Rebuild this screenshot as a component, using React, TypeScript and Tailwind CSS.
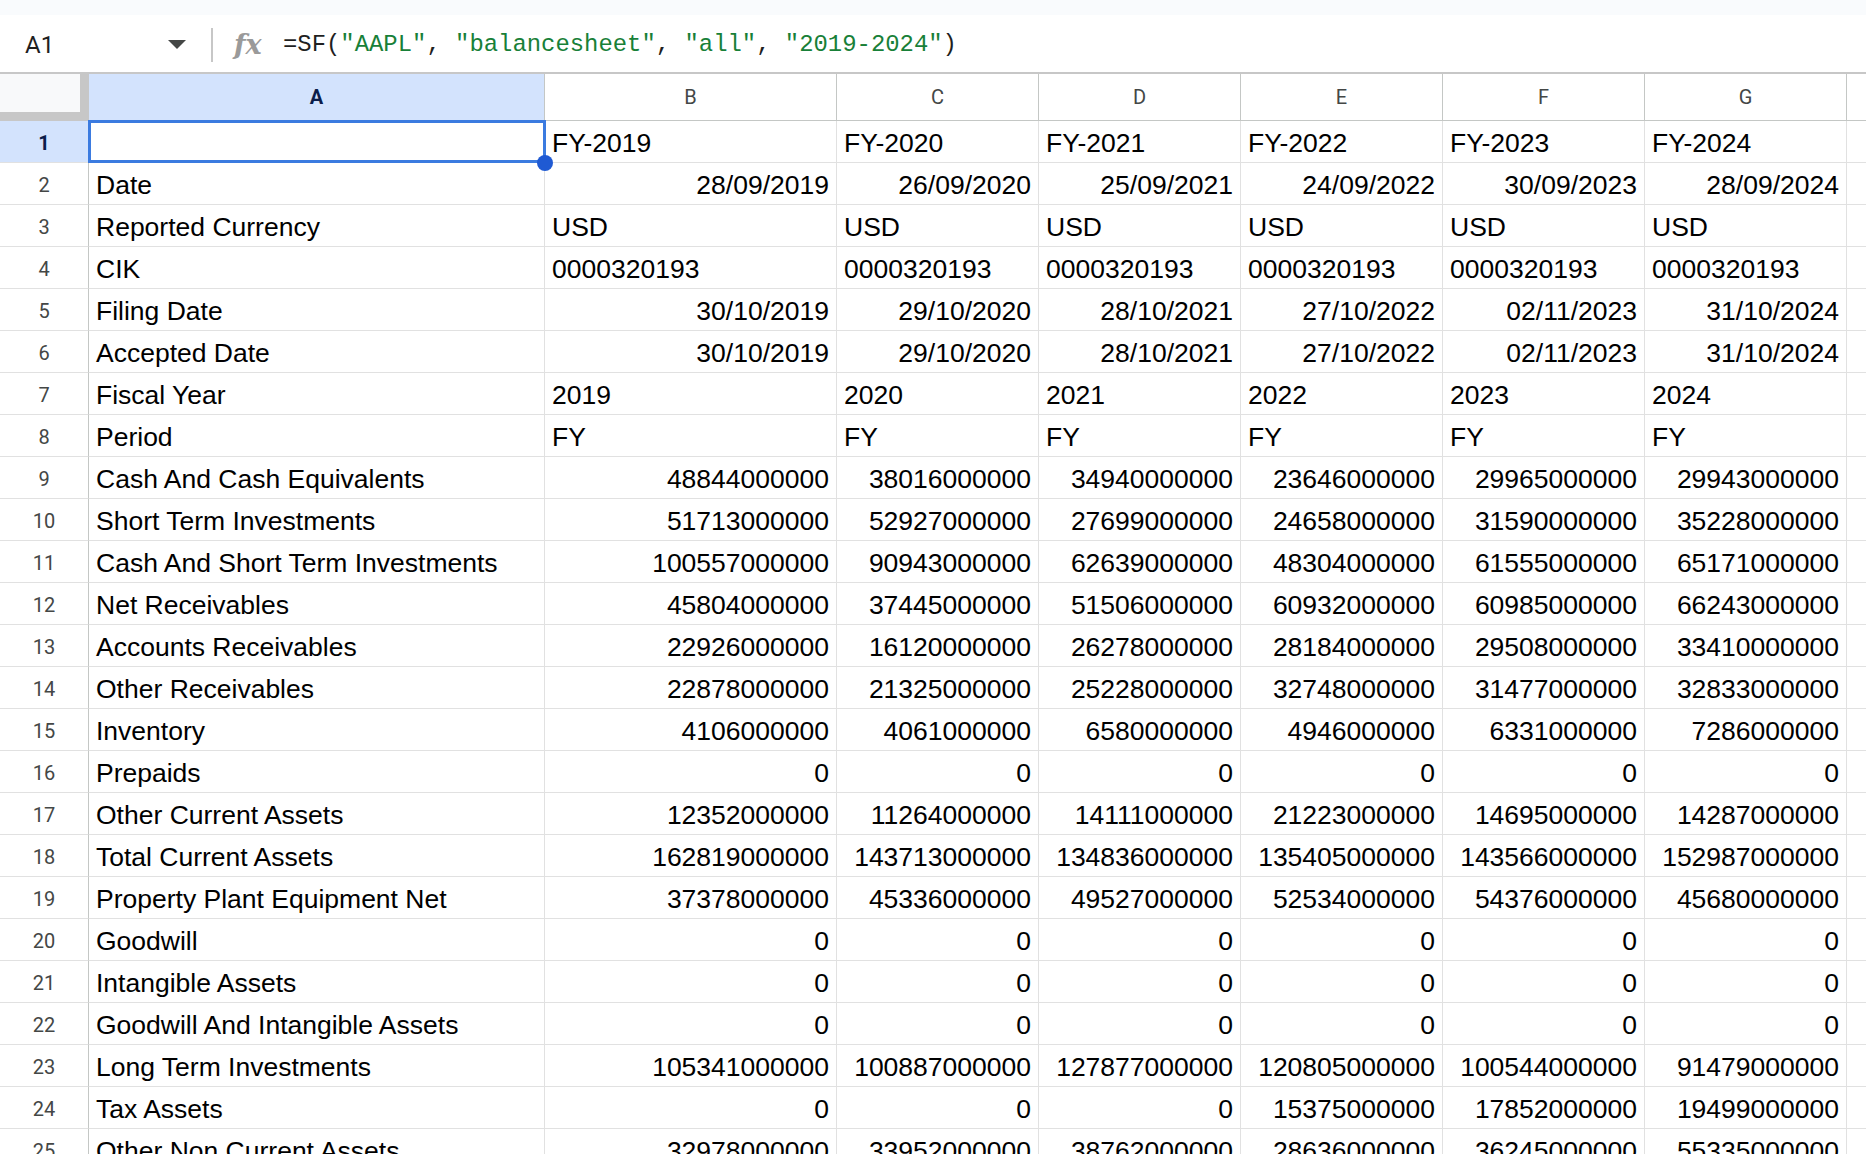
import React from "react";

type Align = "l" | "r";
type Row = { label: string; vals: string[]; align: Align };

const same = (v: string): string[] => [v, v, v, v, v, v];

const rows: Row[] = [
  { label: "", vals: ["FY-2019", "FY-2020", "FY-2021", "FY-2022", "FY-2023", "FY-2024"], align: "l" },
  { label: "Date", vals: ["28/09/2019", "26/09/2020", "25/09/2021", "24/09/2022", "30/09/2023", "28/09/2024"], align: "r" },
  { label: "Reported Currency", vals: same("USD"), align: "l" },
  { label: "CIK", vals: same("0000320193"), align: "l" },
  { label: "Filing Date", vals: ["30/10/2019", "29/10/2020", "28/10/2021", "27/10/2022", "02/11/2023", "31/10/2024"], align: "r" },
  { label: "Accepted Date", vals: ["30/10/2019", "29/10/2020", "28/10/2021", "27/10/2022", "02/11/2023", "31/10/2024"], align: "r" },
  { label: "Fiscal Year", vals: ["2019", "2020", "2021", "2022", "2023", "2024"], align: "l" },
  { label: "Period", vals: same("FY"), align: "l" },
  { label: "Cash And Cash Equivalents", vals: ["48844000000", "38016000000", "34940000000", "23646000000", "29965000000", "29943000000"], align: "r" },
  { label: "Short Term Investments", vals: ["51713000000", "52927000000", "27699000000", "24658000000", "31590000000", "35228000000"], align: "r" },
  { label: "Cash And Short Term Investments", vals: ["100557000000", "90943000000", "62639000000", "48304000000", "61555000000", "65171000000"], align: "r" },
  { label: "Net Receivables", vals: ["45804000000", "37445000000", "51506000000", "60932000000", "60985000000", "66243000000"], align: "r" },
  { label: "Accounts Receivables", vals: ["22926000000", "16120000000", "26278000000", "28184000000", "29508000000", "33410000000"], align: "r" },
  { label: "Other Receivables", vals: ["22878000000", "21325000000", "25228000000", "32748000000", "31477000000", "32833000000"], align: "r" },
  { label: "Inventory", vals: ["4106000000", "4061000000", "6580000000", "4946000000", "6331000000", "7286000000"], align: "r" },
  { label: "Prepaids", vals: same("0"), align: "r" },
  { label: "Other Current Assets", vals: ["12352000000", "11264000000", "14111000000", "21223000000", "14695000000", "14287000000"], align: "r" },
  { label: "Total Current Assets", vals: ["162819000000", "143713000000", "134836000000", "135405000000", "143566000000", "152987000000"], align: "r" },
  { label: "Property Plant Equipment Net", vals: ["37378000000", "45336000000", "49527000000", "52534000000", "54376000000", "45680000000"], align: "r" },
  { label: "Goodwill", vals: same("0"), align: "r" },
  { label: "Intangible Assets", vals: same("0"), align: "r" },
  { label: "Goodwill And Intangible Assets", vals: same("0"), align: "r" },
  { label: "Long Term Investments", vals: ["105341000000", "100887000000", "127877000000", "120805000000", "100544000000", "91479000000"], align: "r" },
  { label: "Tax Assets", vals: ["0", "0", "0", "15375000000", "17852000000", "19499000000"], align: "r" },
  { label: "Other Non Current Assets", vals: ["32978000000", "33952000000", "38762000000", "28636000000", "36245000000", "55335000000"], align: "r" },
];

const colW = ["w-[292px]", "w-[202px]", "w-[202px]", "w-[202px]", "w-[202px]", "w-[202px]"];
const letters = ["B", "C", "D", "E", "F", "G"];

export default function App() {
  return (
    <div className="w-[1866px] h-[1154px] overflow-hidden bg-white font-['Liberation_Sans',Arial,sans-serif] text-black">
      {/* top strip */}
      <div className="h-[15px] bg-[#f9fbfd]" />
      {/* formula bar */}
      <div className="h-[57px] flex items-center bg-white pt-[3px]">
        <div className="w-[211px] flex items-center pl-[25px] pr-[25px]">
          <span className="text-[24px] text-[#1f1f1f] font-['Roboto',sans-serif] flex-1">A1</span>
          <svg width="18" height="9" viewBox="0 0 18 9" className="mb-[1px]">
            <path d="M0 0 L18 0 L9 9 Z" fill="#444746" />
          </svg>
        </div>
        <div className="w-[2px] h-[34px] bg-[#c7c7c7]" />
        <div className="w-[21px]" />
        <span className="font-['DejaVu_Serif',serif] italic font-bold text-[27px] text-[#9a9a9a] leading-none w-[49px] -mt-[2px]">fx</span>
        <span className="font-['Liberation_Mono',monospace] text-[23.9px] text-[#1f1f1f] whitespace-pre">
          =SF(<span className="text-[#188038]">"AAPL"</span>, <span className="text-[#188038]">"balancesheet"</span>, <span className="text-[#188038]">"all"</span>, <span className="text-[#188038]">"2019-2024"</span>)
        </span>
      </div>
      <div className="h-[2px] bg-[#c7c7c7]" />
      {/* column headers */}
      <div className="flex h-[47px] font-['Roboto',sans-serif] text-[20px]">
        <div className="w-[89px] h-[47px] bg-[#c7c7c7] shrink-0">
          <div className="w-[80px] h-[38px] bg-[#f8f9fa]" />
        </div>
        <div className="w-[456px] shrink-0 bg-[#d3e3fd] border-r border-b border-[#c4c7c5] flex items-center justify-center font-bold text-[#0b1d4a]">
          A
        </div>
        {letters.map((l, i) => (
          <div key={l} className={`${colW[i]} shrink-0 border-r border-b border-[#c4c7c5] flex items-center justify-center text-[#444746]`}>
            {l}
          </div>
        ))}
        <div className="flex-1 border-b border-[#c4c7c5]" />
      </div>
      {/* rows */}
      {rows.map((r, ri) => (
        <div key={ri} className="flex h-[42px]">
          <div
            className={`w-[89px] shrink-0 border-r border-b border-r-[#c4c7c5] border-b-[#e1e1e1] flex items-center justify-center pt-[2px] font-['Roboto',sans-serif] text-[20px] ${
              ri === 0 ? "bg-[#d3e3fd] font-bold text-[#0b1d4a]" : "text-[#444746]"
            }`}
          >
            {ri + 1}
          </div>
          <div className="relative w-[456px] shrink-0 border-r border-b border-[#e1e1e1] flex items-center px-[7px] pt-[4px] text-[26.5px] whitespace-nowrap">
            {r.label}
            {ri === 0 && (
              <>
                <div className="absolute -left-[1px] -top-[1px] w-[458px] h-[43px] border-[3px] border-[#3b7be0] pointer-events-none" />
                <div className="absolute -right-[9px] -bottom-[9px] w-[16px] h-[16px] rounded-full bg-[#1f5ad3] z-10" />
              </>
            )}
          </div>
          {r.vals.map((v, ci) => (
            <div
              key={ci}
              className={`${colW[ci]} shrink-0 border-r border-b border-[#e1e1e1] flex items-center px-[7px] pt-[4px] text-[26.5px] whitespace-nowrap ${
                r.align === "r" ? "justify-end" : "justify-start"
              }`}
            >
              {v}
            </div>
          ))}
          <div className="flex-1 border-b border-[#e1e1e1]" />
        </div>
      ))}
    </div>
  );
}
